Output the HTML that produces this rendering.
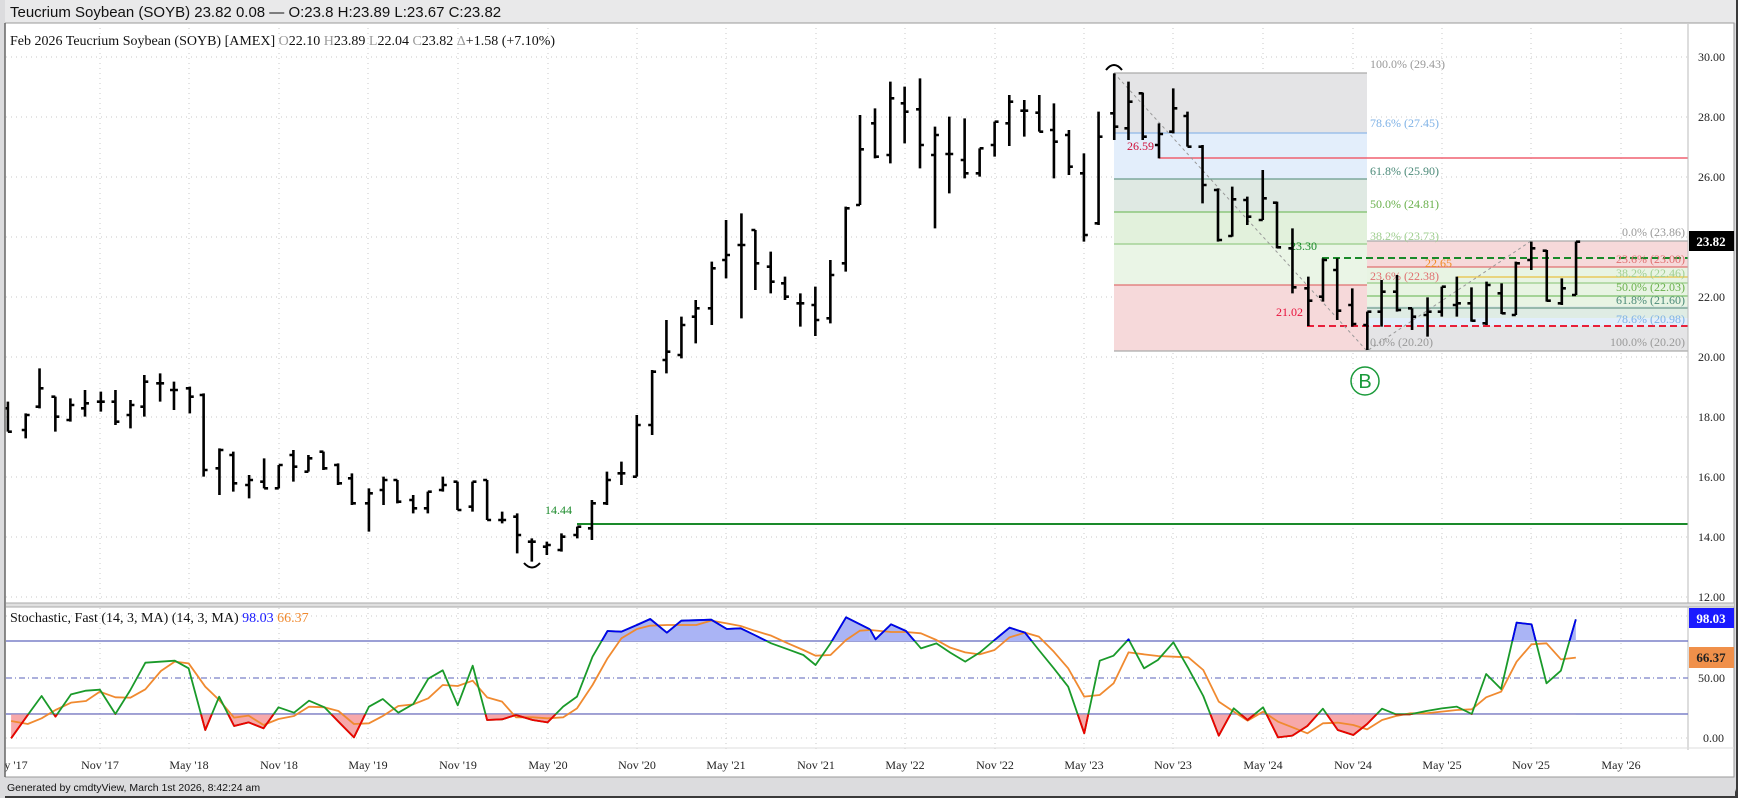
<!DOCTYPE html>
<html><head><meta charset="utf-8">
<style>
html,body{margin:0;padding:0;width:1738px;height:798px;overflow:hidden;background:#d4d4d6;}
svg{display:block}
</style></head>
<body>
<svg width="1738" height="798" xmlns="http://www.w3.org/2000/svg">
<defs>
<clipPath id="cb3" clipPathUnits="userSpaceOnUse"><rect x="0" y="0" width="1600" height="153"/></clipPath>
<clipPath id="cr3" clipPathUnits="userSpaceOnUse"><rect x="0" y="373" width="1600" height="200"/></clipPath>
</defs>
<rect x="0" y="0" width="1738" height="798" fill="#3a3a3a"/>
<rect x="2" y="0" width="1734" height="796" rx="8" fill="#dcdcde"/>
<rect x="2" y="0" width="1734" height="23" fill="#e9e9ea"/>
<text x="10" y="17" font-family="Liberation Sans, sans-serif" font-size="15" fill="#111">Teucrium Soybean (SOYB) 23.82 0.08 — O:23.8 H:23.89 L:23.67 C:23.82</text>
<rect x="5" y="23" width="1729" height="754" fill="#fff" stroke="#9a9a9a" stroke-width="1"/>
<g stroke="#c8c8c8" stroke-width="1" stroke-dasharray="1,4">
<line x1="6" y1="57" x2="1688" y2="57"/><line x1="6" y1="117" x2="1688" y2="117"/><line x1="6" y1="177" x2="1688" y2="177"/><line x1="6" y1="237" x2="1688" y2="237"/><line x1="6" y1="297" x2="1688" y2="297"/><line x1="6" y1="357" x2="1688" y2="357"/><line x1="6" y1="417" x2="1688" y2="417"/><line x1="6" y1="477" x2="1688" y2="477"/><line x1="6" y1="537" x2="1688" y2="537"/><line x1="6" y1="597" x2="1688" y2="597"/>
<line x1="100" y1="28" x2="100" y2="750"/><line x1="189" y1="28" x2="189" y2="750"/><line x1="279" y1="28" x2="279" y2="750"/><line x1="368" y1="28" x2="368" y2="750"/><line x1="458" y1="28" x2="458" y2="750"/><line x1="548" y1="28" x2="548" y2="750"/><line x1="637" y1="28" x2="637" y2="750"/><line x1="726" y1="28" x2="726" y2="750"/><line x1="816" y1="28" x2="816" y2="750"/><line x1="905" y1="28" x2="905" y2="750"/><line x1="995" y1="28" x2="995" y2="750"/><line x1="1084" y1="28" x2="1084" y2="750"/><line x1="1173" y1="28" x2="1173" y2="750"/><line x1="1263" y1="28" x2="1263" y2="750"/><line x1="1353" y1="28" x2="1353" y2="750"/><line x1="1442" y1="28" x2="1442" y2="750"/><line x1="1531" y1="28" x2="1531" y2="750"/><line x1="1621" y1="28" x2="1621" y2="750"/>
<line x1="6" y1="616" x2="1688" y2="616"/><line x1="6" y1="738" x2="1688" y2="738"/>
</g>
<rect x="1114" y="73" width="253" height="60" fill="#e4e4e6"/>
<rect x="1114" y="133" width="253" height="46" fill="#e3eefb"/>
<rect x="1114" y="179" width="253" height="33" fill="#dfe9e3"/>
<rect x="1114" y="212" width="253" height="32" fill="#e2f1dc"/>
<rect x="1114" y="244" width="253" height="41" fill="#eaf5e6"/>
<rect x="1114" y="285" width="253" height="66" fill="#f6d9da"/>
<rect x="1367" y="241" width="321" height="26" fill="#f6d9da"/>
<rect x="1367" y="267" width="321" height="39" fill="#e8f4e3"/>
<rect x="1367" y="306" width="321" height="12" fill="#dfece4"/>
<rect x="1367" y="318" width="321" height="8" fill="#e2eefb"/>
<rect x="1367" y="326" width="321" height="25" fill="#e4e4e6"/>
<g stroke-width="1.3">
<line x1="1114" y1="73" x2="1367" y2="73" stroke="#aaa"/>
<line x1="1114" y1="133" x2="1367" y2="133" stroke="#8fb8e8"/>
<line x1="1114" y1="179" x2="1367" y2="179" stroke="#6a9a8a"/>
<line x1="1114" y1="212" x2="1367" y2="212" stroke="#7cbf6a"/>
<line x1="1114" y1="244" x2="1367" y2="244" stroke="#98cc88"/>
<line x1="1114" y1="285" x2="1367" y2="285" stroke="#e07070"/>
<line x1="1114" y1="351" x2="1688" y2="351" stroke="#aaa"/>
<line x1="1367" y1="241" x2="1688" y2="241" stroke="#aaa"/>
<line x1="1367" y1="267" x2="1688" y2="267" stroke="#e07070"/>
<line x1="1457" y1="277" x2="1688" y2="277" stroke="#e8c040"/>
<line x1="1367" y1="283" x2="1688" y2="283" stroke="#98cc88"/>
<line x1="1367" y1="296" x2="1688" y2="296" stroke="#7cbf6a"/>
<line x1="1367" y1="308" x2="1688" y2="308" stroke="#6a9a8a"/>
<line x1="1159" y1="158" x2="1688" y2="158" stroke="#f06070" stroke-width="1.6"/>
<line x1="577" y1="524" x2="1688" y2="524" stroke="#1a8a2a" stroke-width="2"/>
</g>
<line x1="1322" y1="258" x2="1688" y2="258" stroke="#1a8a2a" stroke-width="2" stroke-dasharray="7,4"/>
<line x1="1307" y1="326" x2="1688" y2="326" stroke="#e8203a" stroke-width="2" stroke-dasharray="7,4"/>
<polyline points="1114,73 1367,351 1531,241" fill="none" stroke="#999" stroke-width="1" stroke-dasharray="3,3"/>
<g font-family="Liberation Serif, serif" font-size="12">
<text x="1370" y="68" fill="#999">100.0% (29.43)</text>
<text x="1370" y="127" fill="#7fb2e6">78.6% (27.45)</text>
<text x="1370" y="175" fill="#4c8a79">61.8% (25.90)</text>
<text x="1370" y="208" fill="#6ab04c">50.0% (24.81)</text>
<text x="1370" y="240" fill="#a0cf90">38.2% (23.73)</text>
<text x="1370" y="280" fill="#e07070">23.6% (22.38)</text>
<text x="1370" y="346" fill="#999">0.0% (20.20)</text>
<g text-anchor="end">
<text x="1685" y="236" fill="#999">0.0% (23.86)</text>
<text x="1685" y="263" fill="#e07070">23.6% (23.00)</text>
<text x="1685" y="277" fill="#a0cf90">38.2% (22.46)</text>
<text x="1685" y="291" fill="#6ab04c">50.0% (22.03)</text>
<text x="1685" y="304" fill="#4c8a79">61.8% (21.60)</text>
<text x="1685" y="323" fill="#7fb2e6">78.6% (20.98)</text>
<text x="1685" y="346" fill="#999">100.0% (20.20)</text>
</g>
<text x="1127" y="150" fill="#d0103a">26.59</text>
<text x="1290" y="250" fill="#1a8a2a">23.30</text>
<text x="1276" y="316" fill="#e8103a">21.02</text>
<text x="1425" y="267" fill="#f08a20">22.65</text>
<text x="545" y="514" fill="#1a8a2a">14.44</text>
</g>
<g fill="none" stroke="#000" stroke-width="2.6">
<g transform="translate(0,340) scale(0.3954,0.33333)">
<path vector-effect="non-scaling-stroke" d="M20,185V275M10,205H20M20,275H30M65,220V295M55,270H65M65,225H75M100,85V205M90,200H100M100,145H110M140,170V275M130,170H140M140,230H150M178,175V245M168,240H178M178,195H188M215,150V230M205,205H215M215,190H225M255,155V215M245,185H255M255,185H265M292,150V255M282,185H292M292,245H302M330,180V265M320,225H330M330,195H340M365,105V230M355,200H365M365,125H375M405,100V185M395,130H405M405,130H415M440,125V210M430,150H440M440,150H450M480,140V220M470,145H480M480,170H490M515,160V410M505,165H515M515,390H525M555,325V465M545,385H555M555,330H565M590,335V455M580,345H590M590,430H600M630,405V475M620,435H630M630,420H640M668,355V445M658,425H668M668,445H678M705,375V445M695,445H705M705,375H715M742,330V425M732,345H742M742,380H752M780,345V395M770,395H780M780,355H790M818,335V390M808,335H818M818,385H828M855,370V435M845,375H855M855,430H865M890,400V495M880,415H890M890,490H900M933,445V575M923,490H933M933,460H943M970,410V495M960,450H970M970,420H980M1005,420V490M995,420H1005M1005,485H1015M1045,465V520M1035,480H1045M1045,505H1055M1082,455V520M1072,505H1082M1082,455H1092M1120,410V455M1110,450H1120M1120,435H1130M1157,425V510M1147,425H1157M1157,510H1167M1195,425V515M1185,500H1195M1195,425H1205M1232,420V540M1222,420H1232M1232,540H1242M1270,515V550M1260,540H1270M1270,540H1280M1308,520V640M1298,530H1308M1308,585H1318M1345,595V665M1335,605H1345M1345,605H1355M1383,605V645M1373,620H1383M1383,615H1393M1420,580V635M1410,630H1420M1420,590H1430M1460,560V595M1450,585H1460M1460,560H1470M1497,480V600M1487,565H1497M1497,490H1507M1535,395V495M1525,490H1535M1535,420H1545"/>
</g>
<g transform="translate(560,60) scale(0.35714,0.33333)">
<path vector-effect="non-scaling-stroke" d="M172,1205V1275M161,1240H172M172,1240H183M215,1065V1250M204,1250H215M215,1095H226M258,930V1125M247,1095H258M258,935H269M298,780V940M287,900H298M298,875H309M340,770V895M329,885H340M340,795H351M380,720V850M369,770H380M380,745H391M425,605V795M414,745H425M425,625H436M465,480V655M454,600H465M465,585H476M508,460V775M497,555H508M508,555H519M547,510V690M536,510H547M547,610H558M590,575V700M579,620H590M590,665H601M630,650V720M619,670H630M630,710H641M673,700V800M662,730H673M673,730H684M715,680V828M704,735H715M715,780H726M757,600V790M746,775H757M757,645H768M800,440V635M789,610H800M800,445H811M840,165V435M829,435H840M840,268H851M882,145V295M871,190H882M882,290H893M925,65V310M914,285H925M925,115H936M965,80V250M954,130H965M965,155H976M1008,55V325M997,148H1008M1008,255H1019M1050,200V505M1039,285H1050M1050,225H1061M1090,170V400M1079,282H1090M1090,282H1101M1133,175V355M1122,300H1133M1133,340H1144M1175,265V350M1164,340H1175M1175,265H1186M1217,185V290M1206,255H1217M1217,185H1228M1258,105V258M1247,190H1258M1258,125H1269M1300,120V230M1289,152H1300M1300,152H1311M1342,105V215M1331,158H1342M1342,215H1353M1383,130V355M1372,210H1383M1383,245H1394M1425,210V345M1414,225H1425M1425,320H1436M1467,280V545M1456,340H1467M1467,525H1478M1508,155V495M1497,490H1508M1508,230H1519"/>
</g>
<g transform="translate(1100,40) scale(0.40689,0.33333)">
<path vector-effect="non-scaling-stroke" d="M35,100V300M25,220H35M35,260H45M70,125V300M60,265H70M70,185H80M105,158V300M95,160H105M105,290H115M145,250V355M135,315H145M145,282H155M180,145V280M170,275H180M180,205H190M215,215V320M205,228H215M215,320H225M252,315V490M242,320H252M252,435H262M290,445V605M280,450H290M290,600H300M325,440V590M315,588H325M325,478H335M362,470V555M352,480H362M362,530H372M400,390V540M390,540H400M400,475H410M435,485V625M425,488H435M435,622H445M473,565V760M463,625H473M473,742H483M512,710V858M502,745H512M512,782H522M548,655V785M538,770H548M548,660H558M583,655V840M573,690H583M583,812H593M620,745V860M610,795H620M620,852H630M657,815V930M647,855H657M657,815H667M692,720V860M682,815H692M692,755H702M730,705V815M720,755H730M730,810H740M767,805V870M757,805H767M767,830H777M805,772V890M795,825H805M805,815H815M840,740V830M830,815H840M840,740H850M877,710V830M867,795H877M877,790H887M913,742V845M903,790H913M913,842H923M950,725V855M940,850H950M950,735H960M987,730V822M977,760H987M987,820H997M1022,665V825M1012,825H1022M1022,670H1032M1060,605V690M1050,660H1060M1060,625H1070M1098,630V785M1088,632H1098M1098,782H1108M1135,715V795M1125,790H1135M1135,745H1145M1170,605V765M1160,765H1170M1170,605H1180"/>
</g>
</g>
<path d="M524,563 Q532,572 540,563" fill="none" stroke="#000" stroke-width="2"/>
<path d="M1106,70 Q1114,60 1122,70" fill="none" stroke="#000" stroke-width="2"/>
<circle cx="1365" cy="381" r="14" fill="none" stroke="#1a9a3a" stroke-width="1.5"/>
<text x="1365" y="388" text-anchor="middle" font-family="Liberation Sans, sans-serif" font-size="20" fill="#1a9a3a">B</text>
<text x="10" y="45" font-family="Liberation Serif, serif" font-size="14" fill="#111">Feb 2026 Teucrium Soybean (SOYB) [AMEX] <tspan fill="#999">O</tspan>22.10 <tspan fill="#999">H</tspan>23.89 <tspan fill="#999">L</tspan>22.04 <tspan fill="#999">C</tspan>23.82 <tspan fill="#999">Δ</tspan>+1.58 (+7.10%)</text>
<line x1="1688" y1="24" x2="1688" y2="750" stroke="#bbb" stroke-width="1"/>
<rect x="6" y="603" width="1728" height="4" fill="#e0e0e0"/>
<line x1="6" y1="603" x2="1734" y2="603" stroke="#aaa"/>
<line x1="6" y1="607" x2="1734" y2="607" stroke="#aaa"/>
<line x1="6" y1="748" x2="1734" y2="748" stroke="#ddd"/>
<g font-family="Liberation Serif, serif" font-size="12" fill="#222">
<text x="1698" y="61">30.00</text><text x="1698" y="121">28.00</text><text x="1698" y="181">26.00</text><text x="1698" y="301">22.00</text><text x="1698" y="361">20.00</text><text x="1698" y="421">18.00</text><text x="1698" y="481">16.00</text><text x="1698" y="541">14.00</text><text x="1698" y="601">12.00</text>
<text x="1698" y="682">50.00</text><text x="1703" y="742">0.00</text>
</g>
<rect x="1689" y="231" width="45" height="20" fill="#000"/>
<text x="1711" y="246" text-anchor="middle" font-family="Liberation Serif, serif" font-size="13" font-weight="bold" fill="#fff">23.82</text>
<rect x="1689" y="608" width="45" height="20" fill="#1a1aff"/>
<text x="1711" y="623" text-anchor="middle" font-family="Liberation Serif, serif" font-size="13" font-weight="bold" fill="#fff">98.03</text>
<rect x="1689" y="647" width="45" height="21" fill="#f0904a"/>
<text x="1711" y="662" text-anchor="middle" font-family="Liberation Serif, serif" font-size="13" font-weight="bold" fill="#222">66.37</text>
<line x1="6" y1="641" x2="1688" y2="641" stroke="#7b80c8" stroke-width="1.6"/>
<line x1="6" y1="714" x2="1688" y2="714" stroke="#7b80c8" stroke-width="1.6"/>
<line x1="6" y1="678" x2="1688" y2="678" stroke="#7b80c8" stroke-width="1.2" stroke-dasharray="6,3,1,3"/>
<g transform="translate(0,590) scale(0.5548,0.33333)" fill="none" stroke-linejoin="round">
<polygon clip-path="url(#cb3)" fill="#aab4f5" points="20,445 50,375 75,318 100,380 128,313 155,302 180,299 208,372 235,300 262,218 315,212 340,235 370,420 395,320 422,408 448,397 475,415 502,352 530,368 557,332 585,352 610,395 638,442 665,350 690,327 718,368 745,342 772,266 798,241 825,346 852,227 878,390 905,388 930,375 960,390 987,397 1015,350 1040,320 1068,200 1095,123 1120,125 1148,105 1172,87 1202,128 1228,92 1282,89 1310,117 1335,115 1360,135 1390,160 1420,178 1448,195 1470,225 1497,160 1525,82 1568,118 1568,153 20,153"/>
<polygon clip-path="url(#cr3)" fill="#f7a8aa" points="20,445 50,375 75,318 100,380 128,313 155,302 180,299 208,372 235,300 262,218 315,212 340,235 370,420 395,320 422,408 448,397 475,415 502,352 530,368 557,332 585,352 610,395 638,442 665,350 690,327 718,368 745,342 772,266 798,241 825,346 852,227 878,390 905,388 930,375 960,390 987,397 1015,350 1040,320 1068,200 1095,123 1120,125 1148,105 1172,87 1202,128 1228,92 1282,89 1310,117 1335,115 1360,135 1390,160 1420,178 1448,195 1470,225 1497,160 1525,82 1568,118 1568,373 20,373"/>
<polyline vector-effect="non-scaling-stroke" stroke="#f08a30" stroke-width="1.8" points="20,393 50,402 75,385 100,360 128,338 155,333 180,305 208,322 235,323 262,298 290,243 315,215 340,220 370,290 395,330 422,383 448,377 475,405 502,387 530,378 557,350 585,352 610,363 638,402 665,400 690,378 718,348 745,343 772,325 798,285 825,288 852,272 878,322 905,335 930,382 960,382 987,385 1015,382 1040,355 1068,285 1095,205 1120,145 1148,117 1172,107 1202,105 1228,105 1255,105 1282,92 1310,100 1335,108 1360,122 1390,137 1420,160 1448,180 1470,197 1497,195 1525,150 1550,122 1568,120"/>
<polyline vector-effect="non-scaling-stroke" stroke="#1a9a2a" stroke-width="1.8" points="20,445 50,375 75,318 100,380 128,313 155,302 180,299 208,372 235,300 262,218 315,212 340,235 370,420 395,320 422,408 448,397 475,415 502,352 530,368 557,332 585,352 610,395 638,442 665,350 690,327 718,368 745,342 772,266 798,241 825,346 852,227 878,390 905,388 930,375 960,390 987,397 1015,350 1040,320 1068,200 1095,123 1120,125 1148,105 1172,87 1202,128 1228,92 1282,89 1310,117 1335,115 1360,135 1390,160 1420,178 1448,195 1470,225 1497,160 1525,82 1568,118"/>
<polyline clip-path="url(#cb3)" vector-effect="non-scaling-stroke" stroke="#0000ee" stroke-width="1.8" points="20,445 50,375 75,318 100,380 128,313 155,302 180,299 208,372 235,300 262,218 315,212 340,235 370,420 395,320 422,408 448,397 475,415 502,352 530,368 557,332 585,352 610,395 638,442 665,350 690,327 718,368 745,342 772,266 798,241 825,346 852,227 878,390 905,388 930,375 960,390 987,397 1015,350 1040,320 1068,200 1095,123 1120,125 1148,105 1172,87 1202,128 1228,92 1282,89 1310,117 1335,115 1360,135 1390,160 1420,178 1448,195 1470,225 1497,160 1525,82 1568,118"/>
<polyline clip-path="url(#cr3)" vector-effect="non-scaling-stroke" stroke="#ee0000" stroke-width="1.8" points="20,445 50,375 75,318 100,380 128,313 155,302 180,299 208,372 235,300 262,218 315,212 340,235 370,420 395,320 422,408 448,397 475,415 502,352 530,368 557,332 585,352 610,395 638,442 665,350 690,327 718,368 745,342 772,266 798,241 825,346 852,227 878,390 905,388 930,375 960,390 987,397 1015,350 1040,320 1068,200 1095,123 1120,125 1148,105 1172,87 1202,128 1228,92 1282,89 1310,117 1335,115 1360,135 1390,160 1420,178 1448,195 1470,225 1497,160 1525,82 1568,118"/>
</g>
<g transform="translate(870,590) scale(0.5536,0.33333)" fill="none" stroke-linejoin="round">
<polygon clip-path="url(#cb3)" fill="#aab4f5" points="0,118 10,148 38,103 65,123 92,175 120,160 145,188 172,215 198,188 225,150 252,113 280,128 305,180 332,235 358,290 387,430 415,212 440,197 467,148 495,235 520,210 548,157 575,235 602,318 630,437 657,355 682,390 710,352 737,442 763,437 790,408 818,356 845,420 873,435 898,402 925,356 950,373 975,373 1005,363 1033,355 1060,350 1087,372 1113,252 1140,297 1168,98 1195,103 1222,280 1248,242 1275,88 1275,153 0,153"/>
<polygon clip-path="url(#cr3)" fill="#f7a8aa" points="0,118 10,148 38,103 65,123 92,175 120,160 145,188 172,215 198,188 225,150 252,113 280,128 305,180 332,235 358,290 387,430 415,212 440,197 467,148 495,235 520,210 548,157 575,235 602,318 630,437 657,355 682,390 710,352 737,442 763,437 790,408 818,356 845,420 873,435 898,402 925,356 950,373 975,373 1005,363 1033,355 1060,350 1087,372 1113,252 1140,297 1168,98 1195,103 1222,280 1248,242 1275,88 1275,373 0,373"/>
<polyline vector-effect="non-scaling-stroke" stroke="#f08a30" stroke-width="1.8" points="0,120 38,126 65,126 92,130 120,150 145,173 172,187 198,193 225,180 252,142 280,128 305,140 332,185 358,235 387,320 415,315 440,280 467,187 495,193 520,198 548,200 575,202 602,240 630,335 657,365 682,392 710,365 737,395 763,412 790,430 818,400 845,398 873,405 898,418 925,390 950,378 975,370 1005,370 1033,365 1060,360 1087,358 1113,322 1140,305 1168,215 1195,163 1222,160 1248,208 1275,203"/>
<polyline vector-effect="non-scaling-stroke" stroke="#1a9a2a" stroke-width="1.8" points="0,118 10,148 38,103 65,123 92,175 120,160 145,188 172,215 198,188 225,150 252,113 280,128 305,180 332,235 358,290 387,430 415,212 440,197 467,148 495,235 520,210 548,157 575,235 602,318 630,437 657,355 682,390 710,352 737,442 763,437 790,408 818,356 845,420 873,435 898,402 925,356 950,373 975,373 1005,363 1033,355 1060,350 1087,372 1113,252 1140,297 1168,98 1195,103 1222,280 1248,242 1275,88"/>
<polyline clip-path="url(#cb3)" vector-effect="non-scaling-stroke" stroke="#0000ee" stroke-width="1.8" points="0,118 10,148 38,103 65,123 92,175 120,160 145,188 172,215 198,188 225,150 252,113 280,128 305,180 332,235 358,290 387,430 415,212 440,197 467,148 495,235 520,210 548,157 575,235 602,318 630,437 657,355 682,390 710,352 737,442 763,437 790,408 818,356 845,420 873,435 898,402 925,356 950,373 975,373 1005,363 1033,355 1060,350 1087,372 1113,252 1140,297 1168,98 1195,103 1222,280 1248,242 1275,88"/>
<polyline clip-path="url(#cr3)" vector-effect="non-scaling-stroke" stroke="#ee0000" stroke-width="1.8" points="0,118 10,148 38,103 65,123 92,175 120,160 145,188 172,215 198,188 225,150 252,113 280,128 305,180 332,235 358,290 387,430 415,212 440,197 467,148 495,235 520,210 548,157 575,235 602,318 630,437 657,355 682,390 710,352 737,442 763,437 790,408 818,356 845,420 873,435 898,402 925,356 950,373 975,373 1005,363 1033,355 1060,350 1087,372 1113,252 1140,297 1168,98 1195,103 1222,280 1248,242 1275,88"/>
</g>
<text x="10" y="622" font-family="Liberation Serif, serif" font-size="14" fill="#111">Stochastic, Fast (14, 3, MA)  (14, 3, MA) <tspan fill="#1a1aff">98.03</tspan> <tspan fill="#f08a30">66.37</tspan></text>
<g font-family="Liberation Serif, serif" font-size="12" fill="#222" text-anchor="middle">
<text x="8" y="769">May '17</text><text x="100" y="769">Nov '17</text><text x="189" y="769">May '18</text><text x="279" y="769">Nov '18</text><text x="368" y="769">May '19</text><text x="458" y="769">Nov '19</text><text x="548" y="769">May '20</text><text x="637" y="769">Nov '20</text><text x="726" y="769">May '21</text><text x="816" y="769">Nov '21</text><text x="905" y="769">May '22</text><text x="995" y="769">Nov '22</text><text x="1084" y="769">May '23</text><text x="1173" y="769">Nov '23</text><text x="1263" y="769">May '24</text><text x="1353" y="769">Nov '24</text><text x="1442" y="769">May '25</text><text x="1531" y="769">Nov '25</text><text x="1621" y="769">May '26</text>
</g>
<rect x="0" y="0" width="5" height="798" fill="#dcdcde"/>
<line x1="5" y1="23" x2="5" y2="777" stroke="#666" stroke-width="1.5"/>
<rect x="3" y="778" width="1732" height="18" fill="#dcdcde"/>
<text x="7" y="791" font-family="Liberation Sans, sans-serif" font-size="10.5" fill="#111">Generated by cmdtyView, March 1st 2026, 8:42:24 am</text>
</svg>
</body></html>
